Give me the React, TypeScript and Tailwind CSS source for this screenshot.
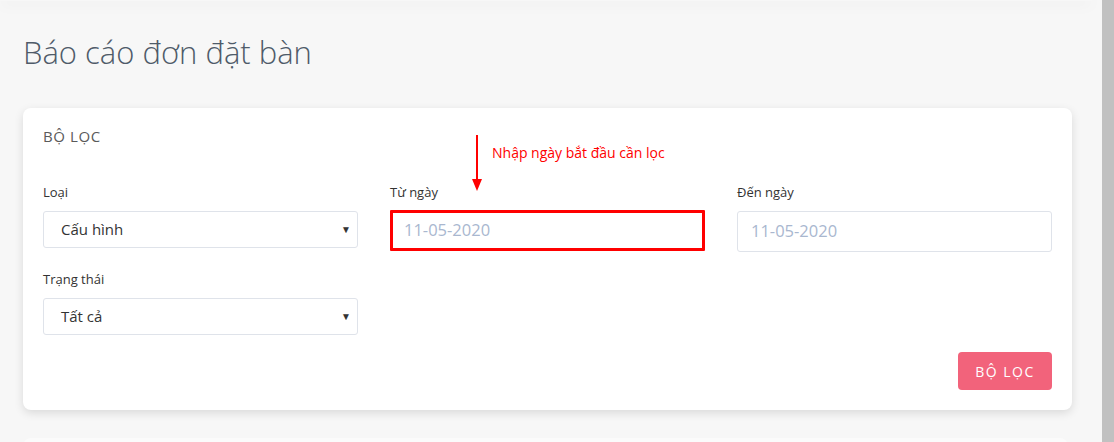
import React from 'react'

const font = { fontFamily: '"Open Sans", "Noto Sans", sans-serif' }

const SelectBox = ({ value }: { value: string }) => (
  <div className="flex h-[37px] items-center justify-between rounded-[3px] border border-[#dfe3ea] bg-white pl-[17px] pr-[6px] text-[15px] text-[#333]">
    <span>{value}</span>
    <span className="text-[10px] text-[#333]">▼</span>
  </div>
)

const DateBox = ({ value, highlight }: { value: string; highlight?: boolean }) => (
  <div
    className={
      highlight
        ? 'flex h-[41px] -mt-[1px] items-center rounded-[1px] border-[3px] border-[#ff0000] bg-white pl-[11px] text-[16.5px] text-[#a9b7cf]'
        : 'flex h-[41px] items-center rounded-[3px] border border-[#dfe3ea] bg-white pl-[13px] text-[16.5px] text-[#a9b7cf]'
    }
  >
    {value}
  </div>
)

const Field = ({ label, children }: { label: string; children: React.ReactNode }) => (
  <div className="flex flex-col">
    <label className="mb-[10px] text-[13px] leading-[18px] text-[#333]">{label}</label>
    {children}
  </div>
)

export default function App() {
  return (
    <div className="flex h-[442px] w-[1114px] overflow-hidden bg-[#f7f7f7]" style={font}>
      <div className="relative flex-1">
        <div className="absolute left-0 top-0 h-[1px] w-[1092px] bg-[#f7f7f7] shadow-[0_2px_14px_rgba(0,0,0,0.22)]" />
        <div className="pl-[23px] pr-[30px]">
          <h1 className="pt-[33px] text-[31px] font-light leading-[38px] text-[#4f5b69]">Báo cáo đơn đặt bàn</h1>
          <div className="mt-[37px] rounded-[8px] bg-white px-[20px] pb-[20px] pt-[18px] shadow-[0_3px_10px_rgba(0,0,0,0.12)]">
            <div className="relative">
              <h2 className="text-[15px] leading-[20px] tracking-[0.6px] text-[#5a5a5a]">BỘ LỌC</h2>
              {/* annotation */}
              <div className="absolute left-[429px] top-[9px] flex flex-col items-center">
                <div className="h-[44px] w-[2px] bg-[#ff0000]" />
                <div className="h-0 w-0 border-x-[5px] border-t-[12px] border-x-transparent border-t-[#ff0000]" />
              </div>
              <span className="absolute left-[449px] top-[16px] text-[14px] text-[#ff0000]">Nhập ngày bắt đầu cần lọc</span>
            </div>
            <div className="mt-[37px] grid grid-cols-3 gap-x-[32px] gap-y-[18px]">
              <Field label="Loại">
                <SelectBox value="Cấu hình" />
              </Field>
              <Field label="Từ ngày">
                <DateBox value="11-05-2020" highlight />
              </Field>
              <Field label="Đến ngày">
                <DateBox value="11-05-2020" />
              </Field>
              <Field label="Trạng thái">
                <SelectBox value="Tất cả" />
              </Field>
            </div>
            <div className="mt-[17px] flex justify-end">
              <button className="h-[38px] w-[94px] rounded-[4px] bg-[#f2637b] text-[14px] tracking-[1.5px] text-white">BỘ LỌC</button>
            </div>
          </div>
          <div className="mt-[28px] h-[20px] w-[1045px] rounded-t-[8px] bg-[#fbfbfb]" />
        </div>
      </div>
      <div className="w-[12px] bg-[#c1c1c1]" />
    </div>
  )
}
